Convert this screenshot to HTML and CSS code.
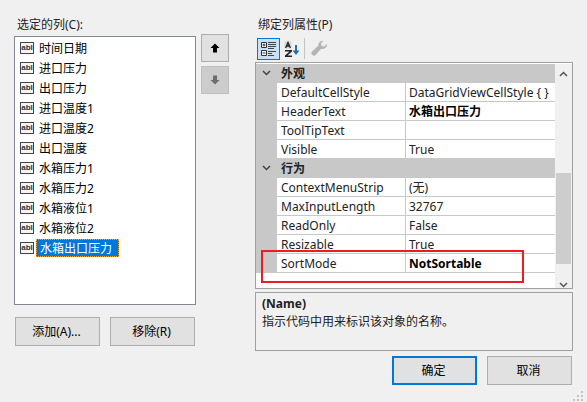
FILE: index.html
```html
<!DOCTYPE html>
<html lang="zh-CN">
<head>
    <meta charset="UTF-8">
    <title>编辑列</title>
    <link rel="stylesheet" href="styles.css">
</head>
<body>
    <div class="dialog">
        <div class="columns">
            <!-- left side: column list -->
            <div class="left">
                <div class="label">选定的列(C):</div>
                <div class="list-row">
                    <div class="list">
                        <div class="item"><span class="abl">abl</span><span class="item-text">时间日期</span></div>
                        <div class="item"><span class="abl">abl</span><span class="item-text">进口压力</span></div>
                        <div class="item"><span class="abl">abl</span><span class="item-text">出口压力</span></div>
                        <div class="item"><span class="abl">abl</span><span class="item-text">进口温度1</span></div>
                        <div class="item"><span class="abl">abl</span><span class="item-text">进口温度2</span></div>
                        <div class="item"><span class="abl">abl</span><span class="item-text">出口温度</span></div>
                        <div class="item"><span class="abl">abl</span><span class="item-text">水箱压力1</span></div>
                        <div class="item"><span class="abl">abl</span><span class="item-text">水箱压力2</span></div>
                        <div class="item"><span class="abl">abl</span><span class="item-text">水箱液位1</span></div>
                        <div class="item"><span class="abl">abl</span><span class="item-text">水箱液位2</span></div>
                        <div class="item"><span class="abl">abl</span><span class="item-text selected">水箱出口压力</span></div>
                    </div>
                    <div class="move-buttons">
                        <div class="move">
                            <svg width="12" height="12" viewBox="0 0 12 12"><path d="M6 1.500 L10.500 6 H8 V10.500 H4 V6 H1.500 Z" fill="#000"/></svg>
                        </div>
                        <div class="move disabled">
                            <svg width="12" height="12" viewBox="0 0 12 12"><path d="M6 10.500 L10.500 6 H8 V1.500 H4 V6 H1.500 Z" fill="#6d6d6d"/></svg>
                        </div>
                    </div>
                </div>
                <div class="list-buttons">
                    <div class="btn">添加(A)...</div>
                    <div class="btn">移除(R)</div>
                </div>
            </div>

            <!-- right side: property grid -->
            <div class="right">
                <div class="label">绑定列属性(P)</div>
                <div class="toolbar">
                    <div class="tool active">
                        <svg width="16" height="16" viewBox="0 0 16 16">
                            <path d="M0.500 1.500h5v5h-5zM0.500 9.500h5v5h-5z" fill="#fff" stroke="#333"/>
                            <path d="M1.500 4h3M3 2.500v3M1.500 12h3" stroke="#333"/>
                            <path d="M7 1.500h8M7 3.500h8M7 5.500h8M7 7.500h6M7 10.500h8M7 12.500h4M7 14.500h6" stroke="#444"/>
                        </svg>
                    </div>
                    <div class="tool">
                        <svg width="18" height="18" viewBox="0 0 18 18">
                            <path d="M1.500 1.500h7v7h-7z" fill="#d8d8d8"/>
                            <path d="M2.600 8 L5 2.400 L7.400 8 M3.600 6h2.800" fill="none" stroke="#222" stroke-width="1.300"/>
                            <path d="M2 10h7v1.500l-4.500 4H9v1.500H2v-1.500l4.500-4H2z" fill="#222"/>
                            <path d="M13 5v7" stroke="#1e70b4" stroke-width="2"/>
                            <path d="M9.500 10.500h7L13 15z" fill="#1e70b4"/>
                        </svg>
                    </div>
                    <div class="tool-sep"></div>
                    <div class="tool wrench">
                        <svg width="17" height="17" viewBox="0 0 17 17"><path d="M16 4.500a4.500 4.500 0 0 1-5.800 4.300L4.800 14.800a2.400 2.400 0 0 1-3.600-3.600L7.400 5.800A4.500 4.500 0 0 1 12.500 .8L10 3.300l.6 2.600 2.600 .6L15.800 4z" fill="#b4b4b4"/></svg>
                    </div>
                </div>
                <div class="grid-box">
                    <div class="grid">
                        <div class="category"><svg class="chev" width="9" height="6" viewBox="0 0 9 6"><path d="M1 1 L4.500 4.500 L8 1" fill="none" stroke="#444" stroke-width="1.500"/></svg><span>外观</span></div>
                        <div class="prop"><div class="name">DefaultCellStyle</div><div class="value">DataGridViewCellStyle { }</div></div>
                        <div class="prop"><div class="name">HeaderText</div><div class="value changed">水箱出口压力</div></div>
                        <div class="prop"><div class="name">ToolTipText</div><div class="value"></div></div>
                        <div class="prop"><div class="name">Visible</div><div class="value">True</div></div>
                        <div class="category"><svg class="chev" width="9" height="6" viewBox="0 0 9 6"><path d="M1 1 L4.500 4.500 L8 1" fill="none" stroke="#444" stroke-width="1.500"/></svg><span>行为</span></div>
                        <div class="prop"><div class="name">ContextMenuStrip</div><div class="value">(无)</div></div>
                        <div class="prop"><div class="name">MaxInputLength</div><div class="value">32767</div></div>
                        <div class="prop"><div class="name">ReadOnly</div><div class="value">False</div></div>
                        <div class="prop"><div class="name">Resizable</div><div class="value">True</div></div>
                        <div class="prop"><div class="name">SortMode</div><div class="value changed">NotSortable</div></div>
                    </div>
                    <div class="scrollbar">
                        <svg width="9" height="6" viewBox="0 0 9 6"><path d="M1 5 L4.500 1.500 L8 5" fill="none" stroke="#555" stroke-width="1.500"/></svg>
                        <div class="thumb-space"><div class="thumb"></div></div>
                        <svg width="9" height="6" viewBox="0 0 9 6"><path d="M1 1 L4.500 4.500 L8 1" fill="none" stroke="#555" stroke-width="1.500"/></svg>
                    </div>
                    <div class="red-box"></div>
                </div>
                <div class="help">
                    <div class="help-title">(Name)</div>
                    <div>指示代码中用来标识该对象的名称。</div>
                </div>
                <div class="dialog-buttons">
                    <div class="btn default">确定</div>
                    <div class="btn">取消</div>
                </div>
            </div>
        </div>
        <svg class="grip" width="12" height="12" viewBox="0 0 12 12"><path d="M8 2h2v2H8zM4 6h2v2H4zM8 6h2v2H8zM0 10h2v2H0zM4 10h2v2H4zM8 10h2v2H8z" fill="#c4c4c4"/></svg>
    </div>
</body>
</html>
```

FILE: styles.css
```css
body, html {
    margin: 0;
    padding: 0;
    width: 100%;
    height: 100%;
    overflow: hidden;
    background: #f0f0f0;
    font-family: "Noto Sans", "Noto Sans CJK SC", sans-serif;
    font-size: 12px;
    color: #000;
}

.dialog {
    position: relative;
    width: 587px;
    height: 402px;
}

.columns {
    display: flex;
    padding-top: 16px;
}

.label {
    height: 18px;
    line-height: 17px;
    padding-left: 3px;
    color: #222;
}

/* left side */
.left {
    width: 241px;
    margin-left: 14px;
}

.list-row {
    display: flex;
    gap: 5px;
    margin-top: 2px;
}

.list {
    box-sizing: border-box;
    width: 182px;
    height: 269px;
    background: #fff;
    border: 1px solid #828790;
    padding-top: 1px;
}

.item {
    display: flex;
    align-items: center;
    height: 20px;
    padding-left: 5px;
}

.abl {
    box-sizing: border-box;
    width: 14px;
    height: 12px;
    border: 1px solid #444;
    font-family: "Liberation Sans", sans-serif;
    font-size: 8px;
    font-weight: bold;
    line-height: 10px;
    text-align: center;
    color: #333;
    background: #f4f4f4;
}

.item-text {
    box-sizing: border-box;
    margin-left: 2px;
    padding: 0 6px 0 2px;
    height: 18px;
    line-height: 17px;
    border: 1px solid transparent;
}

.item-text.selected {
    padding-left: 3px;
    background: #0078d7;
    color: #fff;
    border: 1px dotted #e8a33a;
}

.move-buttons {
    display: flex;
    flex-direction: column;
    gap: 4px;
    margin-top: -2px;
}

.move {
    box-sizing: border-box;
    width: 28px;
    height: 28px;
    background: #e1e1e1;
    border: 1px solid #adadad;
    display: flex;
    align-items: center;
    justify-content: center;
}

.move.disabled {
    background: #cccccc;
    border-color: #bfbfbf;
}

.list-buttons {
    display: flex;
    gap: 10px;
    margin: 12px 0 0 1px;
}

.btn {
    box-sizing: border-box;
    width: 85px;
    height: 29px;
    padding-right: 2px;
    line-height: 27px;
    text-align: center;
    background: #e1e1e1;
    border: 1px solid #adadad;
}

.btn.default {
    border: 2px solid #0078d7;
    line-height: 25px;
}

/* right side */
.right {
    width: 318px;
}

.toolbar {
    display: flex;
    align-items: center;
    height: 23px;
    margin: 3px 0 0 2px;
}

.tool {
    box-sizing: border-box;
    width: 23px;
    height: 22px;
    display: flex;
    align-items: center;
    justify-content: center;
}

.tool.active {
    background: #c9e0f7;
    border: 1px solid #0078d7;
}

.tool.wrench {
    margin-left: 2px;
}

.tool-sep {
    width: 1px;
    height: 21px;
    background: #c4c4c4;
    margin: 0 1px 0 1px;
}

.grid-box {
    position: relative;
    box-sizing: border-box;
    display: flex;
    width: 318px;
    height: 227px;
    border: 1px solid #a0a0a0;
    background: #fff;
    margin-top: 2px;
    padding-top: 1px;
}

.grid {
    width: 299px;
    flex: none;
}

.category {
    box-sizing: border-box;
    display: flex;
    align-items: center;
    height: 19px;
    padding-bottom: 1px;
    background: #c8c8c8;
    font-weight: bold;
}

.chev {
    margin-left: 6px;
    width: 9px;
}

.category span {
    margin-left: 10px;
    color: #222;
}

.prop {
    box-sizing: border-box;
    display: flex;
    height: 19px;
    line-height: 20px;
    border-left: 21px solid #c8c8c8;
    border-bottom: 1px solid #c8c8c8;
}

.name {
    box-sizing: border-box;
    width: 129px;
    padding-left: 4px;
    border-right: 1px solid #c8c8c8;
    color: #222;
    white-space: nowrap;
}

.value {
    padding-left: 3px;
    white-space: nowrap;
    color: #222;
}

.value.changed {
    font-weight: bold;
    color: #000;
}

.scrollbar {
    flex: 1;
    display: flex;
    flex-direction: column;
    align-items: center;
    background: #f0f0f0;
    padding-top: 7px;
    box-sizing: border-box;
}

.thumb-space {
    align-self: stretch;
    flex: 1;
    padding: 96px 1px 0 1px;
}

.thumb {
    height: 91px;
    background: #cdcdcd;
}

.red-box {
    position: absolute;
    left: 5px;
    top: 187px;
    box-sizing: border-box;
    width: 263px;
    height: 33px;
    border: 2px solid #ed1c24;
}

.help {
    box-sizing: border-box;
    width: 318px;
    height: 59px;
    margin-top: 3px;
    padding: 2px 6px;
    border: 1px solid #a0a0a0;
    line-height: 18px;
    color: #222;
}

.help-title {
    font-weight: bold;
}

.dialog-buttons {
    display: flex;
    gap: 10px;
    justify-content: flex-end;
    margin: 5px 1px 0 0;
}

.grip {
    position: absolute;
    right: 2px;
    bottom: 1px;
}
```
